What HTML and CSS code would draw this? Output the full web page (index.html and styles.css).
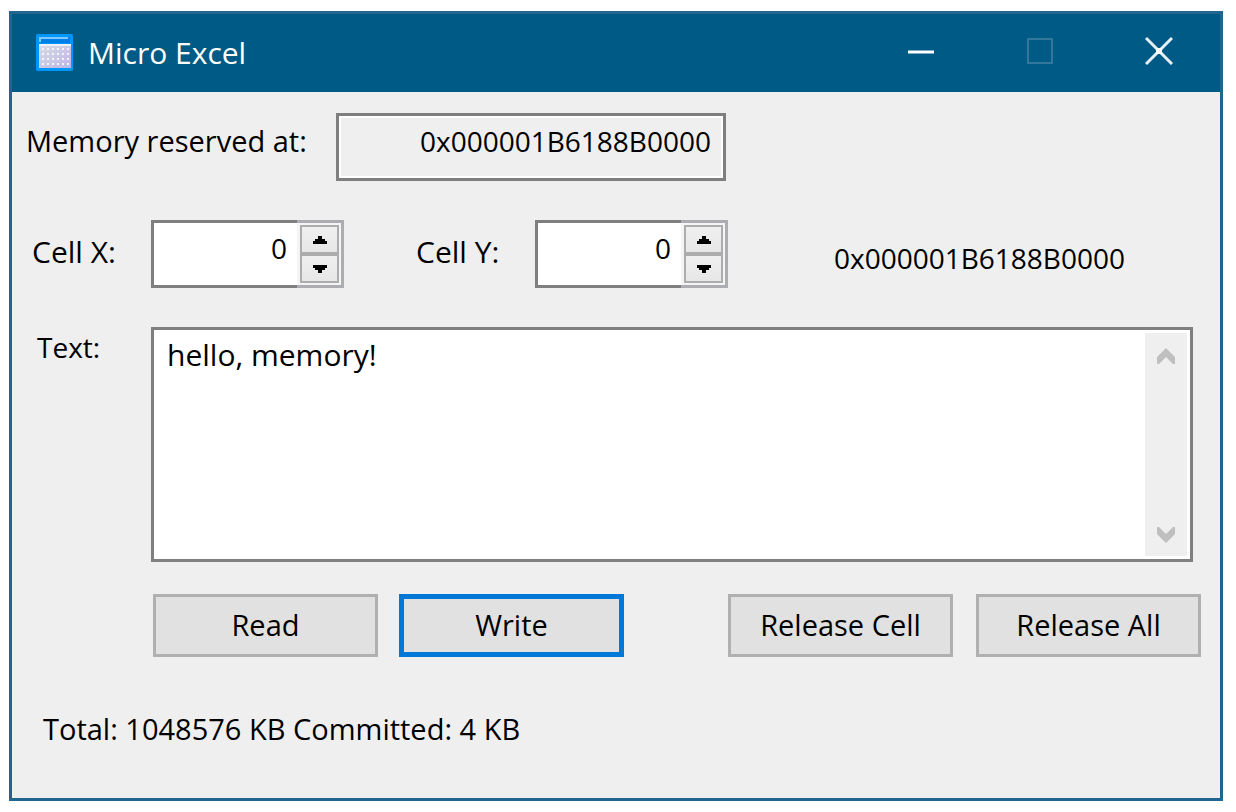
FILE: index.html
```html
<!DOCTYPE html>
<html lang="en">
<head>
  <meta charset="utf-8">
  <title>Micro Excel</title>
  <link rel="stylesheet" href="styles.css">
</head>
<body>
  <div class="window">
    <header class="title-bar">
      <svg class="app-icon" width="38" height="38" viewBox="0 0 38 38" aria-hidden="true">
        <defs>
          <linearGradient id="keys" x1="0" y1="0" x2="1" y2="1">
            <stop offset="0" stop-color="#d9dce4"/>
            <stop offset="1" stop-color="#bcb6e4"/>
          </linearGradient>
          <pattern id="dots" x="5" y="13" width="5" height="5" patternUnits="userSpaceOnUse">
            <rect x="1" y="1" width="2" height="2" fill="#f4f4fc"/>
          </pattern>
        </defs>
        <rect width="37" height="37" rx="2" fill="#0096fa"/>
        <rect x="3" y="3" width="31" height="6" fill="#0080e6"/>
        <path d="M4 8V4h28" fill="none" stroke="#7cc8ff" stroke-width="2"/>
        <rect x="3" y="11" width="32" height="23" fill="url(#keys)"/>
        <rect x="3" y="10" width="32" height="2" fill="#f0f2f8"/>
        <rect x="5" y="13" width="29" height="20" fill="url(#dots)"/>
      </svg>
      <h1>Micro Excel</h1>
      <div class="window-buttons">
        <button type="button" aria-label="Minimize">
          <svg width="28" height="28" viewBox="0 0 28 28"><path d="M1 15h26" stroke="#fff" stroke-width="3"/></svg>
        </button>
        <button type="button" aria-label="Maximize" disabled>
          <svg width="28" height="28" viewBox="0 0 28 28"><rect x="2" y="2" width="24" height="24" fill="none" stroke="#33779d" stroke-width="2"/></svg>
        </button>
        <button type="button" aria-label="Close">
          <svg width="28" height="28" viewBox="0 0 28 28"><path d="M1 1l26 26M27 1L1 27" stroke="#e6eff4" stroke-width="3"/><rect x="11" y="11" width="6" height="6" fill="#fff"/></svg>
        </button>
      </div>
    </header>

    <form class="content">
      <div class="row reserved-row">
        <label for="reserved">Memory reserved at:</label>
        <input class="reserved" type="text" id="reserved" value="0x000001B6188B0000" readonly>
      </div>

      <div class="row cell-row">
        <label for="cell-x">Cell X:</label>
        <div class="spin">
          <input type="number" id="cell-x" value="0" min="0">
          <div class="spin-side">
            <div class="spin-buttons">
              <button type="button" aria-label="Increase X"><svg width="14" height="8" viewBox="0 0 14 8"><path d="M5 0h4v3h3v2h2v3H0V5h2V3h3z"/></svg></button>
              <button type="button" aria-label="Decrease X"><svg width="14" height="8" viewBox="0 0 14 8"><path d="M0 0h14v3h-2v2H9v3H5V5H2V3H0z"/></svg></button>
            </div>
          </div>
        </div>
        <label for="cell-y">Cell Y:</label>
        <div class="spin">
          <input type="number" id="cell-y" value="0" min="0">
          <div class="spin-side">
            <div class="spin-buttons">
              <button type="button" aria-label="Increase Y"><svg width="14" height="8" viewBox="0 0 14 8"><path d="M5 0h4v3h3v2h2v3H0V5h2V3h3z"/></svg></button>
              <button type="button" aria-label="Decrease Y"><svg width="14" height="8" viewBox="0 0 14 8"><path d="M0 0h14v3h-2v2H9v3H5V5H2V3H0z"/></svg></button>
            </div>
          </div>
        </div>
        <output class="cell-address" for="cell-x cell-y">0x000001B6188B0000</output>
      </div>

      <div class="row text-row">
        <label for="cell-text">Text:</label>
        <div class="text-box">
          <textarea id="cell-text">hello, memory!</textarea>
          <div class="scroll-bar">
            <svg width="20" height="16" viewBox="0 0 20 16"><path d="M10 0l9 9v7h-2l-7-7-7 7H1V9z"/></svg>
            <svg width="20" height="16" viewBox="0 0 20 16"><path d="M10 16l9-9V0h-2l-7 7-7-7H1v7z"/></svg>
          </div>
        </div>
      </div>

      <div class="row button-row">
        <button type="button">Read</button>
        <button type="button" class="default">Write</button>
        <button type="button" class="release">Release Cell</button>
        <button type="button">Release All</button>
      </div>

      <p class="status">Total: 1048576 KB Committed: 4 KB</p>
    </form>
  </div>
</body>
</html>
```

FILE: styles.css
```css
* {
  box-sizing: border-box;
}

body {
  margin: 0;
  padding: 11px 13px 11px 9px;
  min-height: 100vh;
  display: flex;
  background: #fff;
  color: #000;
  font-family: "Open Sans", "Noto Sans", sans-serif;
  font-size: 29px;
  line-height: 40px;
}

input,
textarea,
button {
  margin: 0;
  padding: 0;
  border: 0;
  border-radius: 0;
  outline: none;
  color: inherit;
  font: inherit;
}

svg {
  display: block;
}

.window {
  flex: 1;
  display: flex;
  flex-direction: column;
  border: 3px solid #20668f;
  background: #efefef;
}

/* Title bar */
.title-bar {
  display: flex;
  align-items: center;
  height: 78px;
  padding-left: 24px;
  background: #005a86;
  color: #fff;
}

.title-bar h1 {
  margin: 0 0 0 14px;
  font-size: 30px;
  font-weight: 400;
}

.window-buttons {
  display: flex;
  align-self: stretch;
  margin-left: auto;
  padding-right: 2px;
}

.window-buttons button {
  display: flex;
  align-items: center;
  justify-content: center;
  width: 119px;
  padding-bottom: 4px;
  background: none;
}

/* Form rows */
.content {
  display: flex;
  flex-direction: column;
  padding: 21px 27px 0 14px;
}

.row {
  display: flex;
}

.reserved-row label {
  width: 310px;
  padding-top: 8px;
}

.reserved {
  width: 390px;
  height: 68px;
  padding: 0 12px 12px;
  border: 3px solid #7f7f7f;
  background: #efefef;
  box-shadow: inset 0 0 0 2px #fff;
  font-size: 28px;
  text-align: right;
}

.cell-row {
  margin-top: 39px;
}

.cell-row label {
  width: 125px;
  padding: 12px 0 0 6px;
  font-size: 30px;
}

.spin {
  display: flex;
  width: 193px;
  height: 68px;
  margin-right: 66px;
}

.spin input {
  flex: 1;
  min-width: 0;
  padding: 0 10px 12px;
  border: solid #7f7f7f;
  border-width: 3px 0 3px 3px;
  background: #fff;
  font-size: 28px;
  text-align: right;
  appearance: textfield;
}

.spin input::-webkit-inner-spin-button {
  display: none;
}

.spin-side {
  width: 47px;
  padding: 2px 2px 2px 3px;
  border: solid #abadb3;
  border-width: 3px 3px 3px 0;
  background: #f4f4f4;
}

.spin-buttons {
  display: flex;
  flex-direction: column;
  gap: 4px;
  height: 58px;
  padding: 2px;
  background: #acacac;
}

.spin-buttons button {
  flex: 1;
  display: flex;
  align-items: center;
  justify-content: center;
  background: linear-gradient(#f0f0f0, #e6e6e6);
}

.cell-address {
  margin-left: 40px;
  padding-top: 18px;
  font-size: 28px;
}

.text-row {
  margin-top: 39px;
}

.text-row label {
  width: 125px;
  padding-left: 11px;
  font-size: 28px;
}

.text-box {
  flex: 1;
  display: flex;
  height: 235px;
  padding: 3px;
  border: 3px solid #7f7f7f;
  background: #fff;
}

.text-box textarea {
  flex: 1;
  min-width: 0;
  padding: 2px 10px;
  background: #fff;
  font-size: 30px;
  resize: none;
  overflow: hidden;
}

.scroll-bar {
  display: flex;
  flex-direction: column;
  align-items: center;
  justify-content: space-between;
  width: 42px;
  padding: 15px 0 13px;
  background: #efefef;
  fill: #bfbfbf;
}

.button-row {
  margin: 32px -8px 0 0;
  padding-left: 127px;
}

.button-row button {
  width: 225px;
  height: 63px;
  margin-right: 21px;
  padding-bottom: 2px;
  border: 3px solid #b0b0b0;
  background: #e1e1e1;
}

.button-row button:last-child {
  margin-right: 0;
}

.button-row .default {
  border: 5px solid #0078d7;
}

.button-row .release {
  margin-left: auto;
  margin-right: 23px;
}

.status {
  margin: 52px 0 0;
  padding-left: 17px;
}
```
